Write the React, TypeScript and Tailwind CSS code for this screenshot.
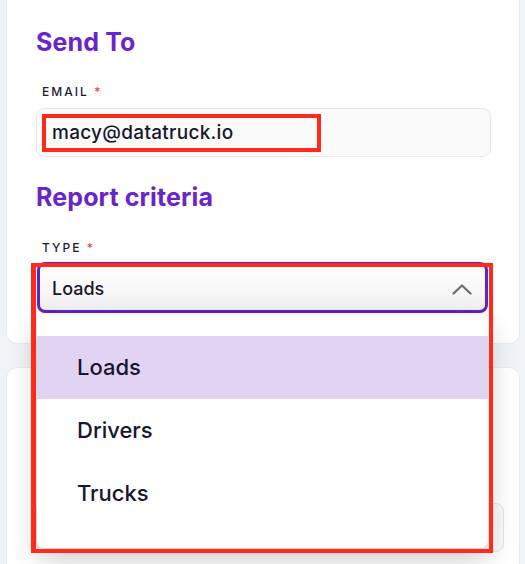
export default function App() {
  return (
    <div className="h-[564px] w-[525px] overflow-hidden bg-[#f1f4f7] pl-[7px] pr-[6px] font-['Inter',sans-serif] text-[#17162e]">
      <div className="relative z-10 -mt-[12px] rounded-[10px] bg-white pt-[38px] pb-[30px] pl-[29px] pr-[28px] shadow-[0_0_0_1px_#e8ecf0]">
        <h2 className="text-[25px] leading-[32px] font-bold tracking-[0.005em] text-[#6a24c9]">Send To</h2>
        <div className="mt-[26px] pl-[6px] text-[12px] leading-[16px] font-medium tracking-[0.17em] text-[#1b1a30]">
          EMAIL <span className="text-[#e5484d]">*</span>
        </div>
        <div className="relative mt-[8px] flex h-[49px] items-center rounded-[8px] border border-[#e6e7ea] bg-[#fafafa] pl-[15px]">
          <span className="text-[19px] leading-[28px] font-medium tracking-[0.015em]">macy@datatruck.io</span>
          <div className="absolute left-[5px] top-[5px] h-[38px] w-[279px] border-[4px] border-[#ff2a1a]" />
        </div>
        <h2 className="mt-[24px] text-[25px] leading-[32px] font-bold tracking-[0.005em] text-[#6a24c9]">Report criteria</h2>
        <div className="mt-[27px] pl-[6px] text-[12px] leading-[16px] font-medium tracking-[0.17em] text-[#1b1a30]">
          TYPE <span className="text-[#e5484d]">*</span>
        </div>
        <div className="relative mt-[6px] ml-[1px] mr-[3px]">
          <div className="flex h-[51px] items-center justify-between rounded-[8px] border-[3px] border-[#6422bf] bg-gradient-to-b from-white to-[#f1f1f1] pt-[3px] pl-[12px] pr-[13px]">
            <span className="text-[18px] leading-[28px] font-medium">Loads</span>
            <svg width="20" height="11" viewBox="0 0 20 11" fill="none">
              <polyline points="1.5,9.5 10,1.5 18.5,9.5" stroke="#6b6b6b" strokeWidth="2.2" strokeLinecap="round" strokeLinejoin="round" />
            </svg>
          </div>
          <div className="absolute left-0 right-0 top-full z-20 mt-[2px] rounded-[8px] bg-white pt-[21px] pb-[23px] shadow-[0_10px_28px_rgba(0,0,0,0.22)]">
            <div className="flex h-[63px] items-center bg-[#e1d4f3] pl-[40px] text-[22px] font-medium">Loads</div>
            <div className="flex h-[63px] items-center pl-[40px] text-[22px] font-medium">Drivers</div>
            <div className="flex h-[63px] items-center pl-[40px] text-[22px] font-medium">Trucks</div>
          </div>
          <div className="absolute -left-[6px] top-[1px] z-30 h-[290px] w-[462px] border-[4px] border-l-[5px] border-[#ff2a1a]" />
        </div>
      </div>
      <div className="mt-[25px] h-[300px] rounded-[10px] bg-white pt-[135px] pl-[29px] pr-[15px] shadow-[0_0_0_1px_#e8ecf0]">
        <div className="h-[49px] rounded-[8px] border border-[#e6e7ea] bg-[#fafafa]" />
      </div>
    </div>
  );
}
